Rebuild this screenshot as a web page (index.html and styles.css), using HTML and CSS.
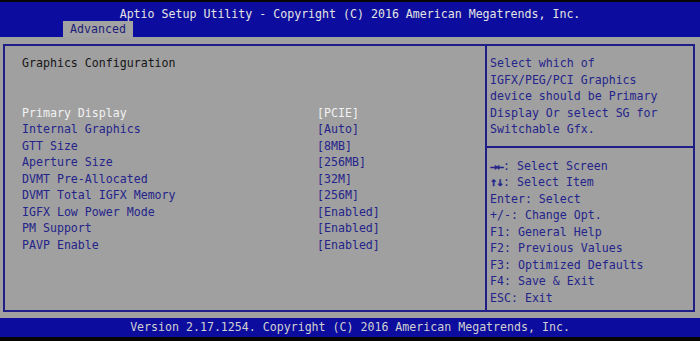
FILE: index.html
```html
<!DOCTYPE html>
<html>
<head>
<meta charset="utf-8">
<link rel="stylesheet" href="styles.css">
</head>
<body>
<div class="screen">
  <header class="header">
    <div class="title">Aptio Setup Utility - Copyright (C) 2016 American Megatrends, Inc.</div>
    <div class="tabs"><div class="tab">Advanced</div></div>
  </header>
  <main class="body">
    <div class="frame">
      <section class="main">
        <div class="line heading">Graphics Configuration</div>
        <div class="line"></div>
        <div class="line"></div>
        <div class="row selected"><span class="label">Primary Display</span><span class="value">[PCIE]</span></div>
        <div class="row"><span class="label">Internal Graphics</span><span class="value">[Auto]</span></div>
        <div class="row"><span class="label">GTT Size</span><span class="value">[8MB]</span></div>
        <div class="row"><span class="label">Aperture Size</span><span class="value">[256MB]</span></div>
        <div class="row"><span class="label">DVMT Pre-Allocated</span><span class="value">[32M]</span></div>
        <div class="row"><span class="label">DVMT Total IGFX Memory</span><span class="value">[256M]</span></div>
        <div class="row"><span class="label">IGFX Low Power Mode</span><span class="value">[Enabled]</span></div>
        <div class="row"><span class="label">PM Support</span><span class="value">[Enabled]</span></div>
        <div class="row"><span class="label">PAVP Enable</span><span class="value">[Enabled]</span></div>
      </section>
      <aside class="help">
        <div class="desc">
          <div class="line">Select which of</div>
          <div class="line">IGFX/PEG/PCI Graphics</div>
          <div class="line">device should be Primary</div>
          <div class="line">Display Or select SG for</div>
          <div class="line">Switchable Gfx.</div>
        </div>
        <div class="keys">
          <div class="line"><b class="arrows">&#8594;&#8592;</b>: Select Screen</div>
          <div class="line"><b class="arrows">&#8593;&#8595;</b>: Select Item</div>
          <div class="line">Enter: Select</div>
          <div class="line">+/-: Change Opt.</div>
          <div class="line">F1: General Help</div>
          <div class="line">F2: Previous Values</div>
          <div class="line">F3: Optimized Defaults</div>
          <div class="line">F4: Save &amp; Exit</div>
          <div class="line">ESC: Exit</div>
        </div>
      </aside>
    </div>
  </main>
  <footer class="footer">Version 2.17.1254. Copyright (C) 2016 American Megatrends, Inc.</footer>
</div>
</body>
</html>
```
FILE: styles.css
```css
* { box-sizing: border-box; margin: 0; padding: 0; }
html, body { width: 700px; height: 341px; overflow: hidden; background: #000; }
body {
  font-family: "DejaVu Sans Mono", "Liberation Mono", monospace;
  font-size: 11.6px;
}
.screen {
  width: 700px;
  height: 341px;
  display: flex;
  flex-direction: column;
  padding-top: 2px;
  padding-bottom: 4px;
  background: #050505;
}
.header {
  background: #0c0c9e;
  height: 35px;
  display: flex;
  flex-direction: column;
  justify-content: space-between;
}
.title {
  color: #e4e4e4;
  text-align: center;
  line-height: 14px;
  padding-top: 5px;
}
.tabs { display: flex; padding-left: 63px; }
.tab {
  background: #a3a3a3;
  color: #1c1c78;
  width: 70px;
  height: 17px;
  line-height: 17px;
  text-align: center;
}
.body {
  flex: 1;
  background: #a0a0a0;
  padding: 7px 5px 6px 3px;
}
.frame {
  height: 100%;
  border: 2px solid #1e1e86;
  display: flex;
}
.main {
  width: 482px;
  border-right: 2px solid #1e1e86;
  padding: 9px 0 0 17px;
}
.line, .row {
  height: 16.5px;
  line-height: 16.5px;
  white-space: pre;
}
.heading { color: #151515; }
.row { display: flex; color: #24248a; }
.row .label { width: 295px; }
.row.selected { color: #f2f2f2; }
.help {
  flex: 1;
  color: #24248a;
  display: flex;
  flex-direction: column;
}
.desc {
  padding: 9px 0 8px 3px;
  border-bottom: 2px solid #1e1e86;
}
.keys { padding: 10px 0 0 3px; }
.arrows {
  font-family: "DejaVu Sans", sans-serif;
  font-size: 9px;
  font-weight: bold;
  letter-spacing: -1px;
  -webkit-text-stroke: 0.5px #24248a;
}
.footer {
  background: #0c0c9e;
  color: #d0d0d0;
  height: 19px;
  line-height: 19px;
  text-align: center;
}
```
